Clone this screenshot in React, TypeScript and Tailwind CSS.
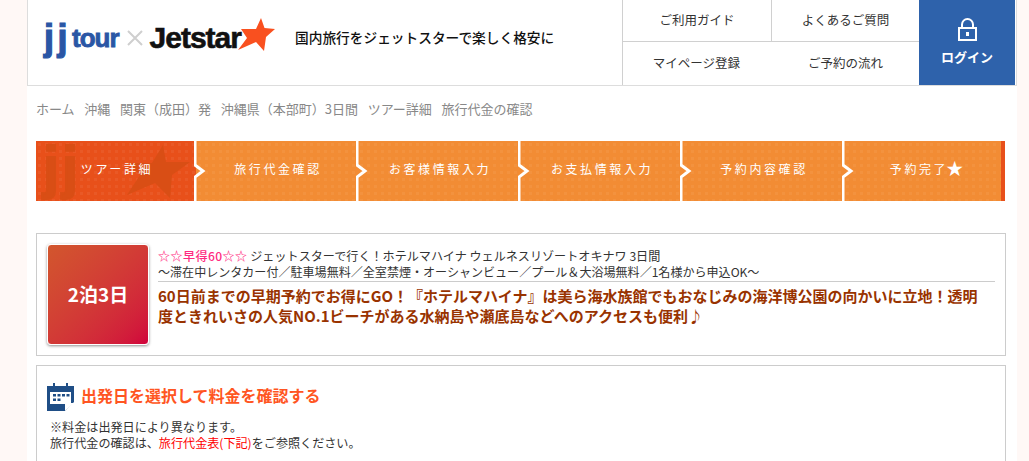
import React from 'react'

const pattern = 'bg-[radial-gradient(circle,rgba(255,255,255,0.05)_1.5px,transparent_2px)] bg-[length:7px_7px]'

const steps = ['ツアー詳細', '旅行代金確認', 'お客様情報入力', 'お支払情報入力', '予約内容確認', '予約完了']

const Chevron = () => (
  <svg className="absolute left-[-2px] top-0 z-10" width="14" height="60" viewBox="0 0 14 60">
    <path d="M1 0V24L9 30L1 36V60" fill="none" stroke="#fff" strokeWidth="3" />
  </svg>
)

const LockIcon = () => (
  <svg width="19" height="23" viewBox="0 0 19 23">
    <path d="M4 10V6.5a5.5 5.5 0 0 1 11 0V10" fill="none" stroke="#fff" strokeWidth="2" />
    <rect x="1" y="10" width="17" height="12" fill="none" stroke="#fff" strokeWidth="2" />
    <rect x="8" y="14" width="3" height="4" fill="#fff" />
  </svg>
)

const CalendarIcon = () => (
  <svg width="28" height="28" viewBox="0 0 28 28">
    <path d="M0 3H27V19L18 28H0Z" fill="#1f4e86" />
    <rect x="3" y="9" width="21" height="12" fill="#fff" />
    <path d="M18 28V20H27Z" fill="#fff" />
    <rect x="6" y="0" width="2" height="6" fill="#1f4e86" />
    <rect x="19" y="0" width="2" height="6" fill="#1f4e86" />
    <g fill="#1f4e86">
      <rect x="6" y="11" width="3" height="2.5" />
      <rect x="10.5" y="11" width="3" height="2.5" />
      <rect x="15" y="11" width="3" height="2.5" />
      <rect x="19.5" y="11" width="3" height="2.5" />
      <rect x="6" y="15.5" width="3" height="2.5" />
      <rect x="10.5" y="15.5" width="3" height="2.5" />
    </g>
  </svg>
)

const Logo = () => (
  <div className="flex w-[250px] items-center font-['Liberation_Sans',sans-serif] font-bold">
    <span className="w-[28px] text-[36px] leading-none tracking-[3.5px] text-[#2a56a5] [-webkit-text-stroke:1.2px_#2a56a5]">jj</span>
    <span className="text-[26px] leading-none tracking-[-1px] text-[#2a56a5] [-webkit-text-stroke:0.8px_#2a56a5]">tour</span>
    <svg className="ml-[8px] mr-[7px]" width="16" height="16" viewBox="0 0 16 16">
      <path d="M1 1L15 15M15 1L1 15" stroke="#cfcfcf" strokeWidth="2" />
    </svg>
    <span className="text-[30px] leading-none tracking-[-1px] text-[#111] [-webkit-text-stroke:0.6px_#111]">Jetstar</span>
    <svg className="ml-[-4px] mt-[-5px] shrink-0" width="38" height="34" viewBox="0 0 38 34">
      <path d="M24 0L27.5 10L38 11L29 19L27 33L19 24L1 32L10 20L4 11L19 11Z" fill="#f9501f" />
    </svg>
  </div>
)

export default function App() {
  return (
    <div className="h-[461px] overflow-hidden bg-[#fff8f6] font-['Noto_Sans_CJK_JP','Liberation_Sans',sans-serif]">
      <div className="ml-[27px] h-full w-[990px] bg-white">
        <header className="flex h-[86px] border-b border-l border-r border-[#dddddd] pr-[1px]">
          <div className="flex flex-1 items-center pb-[10px] pl-[16px]">
            <Logo />
            <p className="ml-[1px] text-[13.7px] font-medium text-[#111]">国内旅行をジェットスターで楽しく格安に</p>
          </div>
          <nav className="grid h-full w-[297px] grid-cols-[149px_147px] grid-rows-[42px_43px] border-l border-[#d0d0d0] text-[12.5px] text-[#333]">
            <a className="flex items-center justify-center border-b border-r border-[#d0d0d0]">ご利用ガイド</a>
            <a className="flex items-center justify-center border-b border-[#d0d0d0]">よくあるご質問</a>
            <a className="flex items-center justify-center pr-[2px]">マイページ登録</a>
            <a className="flex items-center justify-center">ご予約の流れ</a>
          </nav>
          <a className="flex w-[96px] flex-col items-center justify-center gap-[6px] bg-[#2e62ab] text-[13px] font-bold text-white">
            <LockIcon />
            ログイン
          </a>
        </header>

        <div className="ml-[9px] w-[970px]">
          <nav className="mt-[13px] flex h-[20px] items-center gap-[9.7px] text-[13px] text-[#888]">
            <span>ホーム</span>
            <span>沖縄</span>
            <span>関東（成田）発</span>
            <span>沖縄県（本部町）3日間</span>
            <span>ツアー詳細</span>
            <span>旅行代金の確認</span>
          </nav>

          <ol className="mt-[22px] grid h-[60px] grid-cols-[160px_162px_162px_162px_162px_161px]">
            {steps.map((step, i) => (
              <li
                key={step}
                className={
                  i === 0
                    ? `relative flex items-center justify-center bg-[#e8501a] ${pattern}`
                    : i === 5
                      ? `relative flex items-center justify-center border-r-[4px] border-[#e8501a] bg-[#f28c34] pl-[6px] ${pattern}`
                      : `relative flex items-center justify-center bg-[#f28c34] ${pattern}`
                }
              >
                {i > 0 && <Chevron />}
                {i === 0 && (
                  <>
                    <span className="absolute left-[7px] top-[-3px] font-['Liberation_Sans',sans-serif] text-[58px] font-bold leading-none tracking-[3px] text-[#d94e15] [-webkit-text-stroke:2px_#d94e15]">jj</span>
                    <svg className="absolute left-[90px] top-[4px]" width="66" height="56" viewBox="0 0 66 56">
                      <path d="M37 0L40 17L64 17L46 30L44 53L29 38L1 50L14 30L2 18L26 18Z" fill="#d94e15" />
                    </svg>
                  </>
                )}
                <span className="relative mb-[4px] ml-[2px] flex items-center text-[12px] tracking-[2.6px] text-white">
                  {step}
                  {i === 5 && <span className="mb-[3px] ml-[-2px] text-[17px] leading-none tracking-normal">★</span>}
                </span>
              </li>
            ))}
          </ol>

          <section className="mt-[32px] flex h-[123px] gap-[9px] border border-[#cccccc] pl-[10px] pt-[10px]">
            <div className="flex h-[101px] w-[102px] shrink-0 items-center justify-center rounded-[4px] border border-white bg-gradient-to-br from-[#d2562d] to-[#d1003c] text-[19px] font-bold text-white shadow-[0_1px_3px_rgba(0,0,0,0.45)]">
              2泊3日
            </div>
            <div className="mr-[10px] flex-1">
              <div className="mt-[4px] border-b border-[#cccccc] pb-[1px] text-[12.1px] leading-[16px] text-[#333]">
                <p><span className="font-medium tracking-[0.4px] text-[#ff2a80]">☆☆早得60☆☆</span> ジェットスターで行く！ホテルマハイナ ウェルネスリゾートオキナワ 3日間</p>
                <p className="text-[12.05px]">～滞在中レンタカー付／駐車場無料／全室禁煙・オーシャンビュー／プール＆大浴場無料／1名様から申込OK～</p>
              </div>
              <p className="mt-[4px] text-[15px] font-bold leading-[20px] text-[#993300]">
                60日前までの早期予約でお得にGO！『ホテルマハイナ』は美ら海水族館でもおなじみの海洋博公園の向かいに立地！透明<br />度ときれいさの人気NO.1ビーチがある水納島や瀬底島などへのアクセスも便利♪
              </p>
            </div>
          </section>

          <section className="mt-[9px] h-[120px] border border-[#cccccc] px-[10px] pt-[17px]">
            <div className="flex items-center gap-[6px]">
              <CalendarIcon />
              <h2 className="mb-[4px] text-[16px] font-bold text-[#ff5522]">出発日を選択して料金を確認する</h2>
            </div>
            <div className="mt-[8px] pl-[3px] text-[12.1px] leading-[16px] text-[#333]">
              <p>※料金は出発日により異なります。</p>
              <p>旅行代金の確認は、<span className="text-[#f00]">旅行代金表(下記)</span>をご参照ください。</p>
            </div>
          </section>
        </div>
      </div>
    </div>
  )
}
